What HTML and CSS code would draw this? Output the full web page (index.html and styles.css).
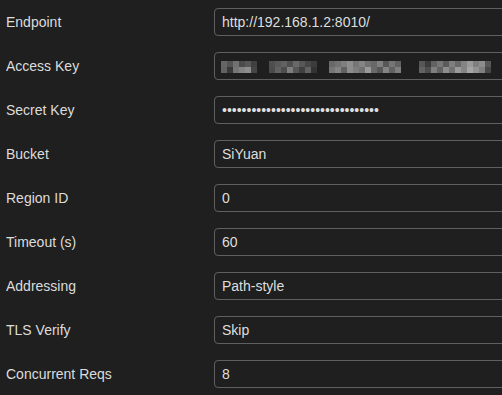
FILE: index.html
```html
<!DOCTYPE html>
<html lang="en">
<head>
<meta charset="utf-8">
<title>S3 Settings</title>
<link rel="stylesheet" href="styles.css">
</head>
<body>
<div class="form">
  <div class="row"><label class="label">Endpoint</label><div class="field">http://192.168.1.2:8010/</div></div>
  <div class="row"><label class="label">Access Key</label><div class="field"><div class="mosaic" aria-label="hidden access key"></div></div></div>
  <div class="row"><label class="label">Secret Key</label><div class="field secret">••••••••••••••••••••••••••••••••</div></div>
  <div class="row"><label class="label">Bucket</label><div class="field">SiYuan</div></div>
  <div class="row"><label class="label">Region ID</label><div class="field">0</div></div>
  <div class="row"><label class="label">Timeout (s)</label><div class="field">60</div></div>
  <div class="row"><label class="label">Addressing</label><div class="field">Path-style</div></div>
  <div class="row"><label class="label">TLS Verify</label><div class="field">Skip</div></div>
  <div class="row"><label class="label">Concurrent Reqs</label><div class="field">8</div></div>
</div>
</body>
</html>
```
FILE: styles.css
```css
html, body {
  margin: 0;
  padding: 0;
  background: #1f1f1f;
  overflow: hidden;
}
body {
  font-family: "Liberation Sans", Arial, sans-serif;
  font-size: 14px;
  color: #dcdcdc;
}
.form {
  display: flex;
  flex-direction: column;
  padding-left: 6px;
  width: 502px;
  box-sizing: border-box;
  overflow: hidden;
}
.row {
  display: flex;
  align-items: center;
  height: 44px;
  overflow: hidden;
}
.label {
  flex: 0 0 208px;
  color: #dcdcdc;
}
.field {
  flex: 0 0 320px;
  box-sizing: border-box;
  height: 28px;
  border: 1px solid #5f5f5f;
  border-radius: 4px;
  padding: 0 7px;
  display: flex;
  align-items: center;
  white-space: nowrap;
  color: #dedede;
  background: #1f1f1f;
}
.secret {
  font-size: 14px;
}
.mosaic {
  width: 270px;
  height: 12px;
  margin-left: -1px;
  margin-top: 1px;
  opacity: 0.9;
  background-repeat: no-repeat;
  background-size: 270px 6px, 270px 6px;
  background-position: 0 0, 0 6px;
  background-image:
    linear-gradient(to right, #6e6e6e 0 6px, #5a5a5a 6px 12px, #7a7a7a 12px 18px, #505050 18px 24px, #5e5e5e 24px 30px, #444 30px 36px, transparent 36px 48px, #555 48px 54px, #606060 54px 60px, #6a6a6a 60px 66px, #555 66px 72px, #727272 72px 78px, #5e5e5e 78px 84px, #4c4c4c 84px 90px, #404040 90px 96px, transparent 96px 108px, #727272 108px 114px, #7c7c7c 114px 120px, #8a8a8a 120px 126px, #9a9a9a 126px 132px, #808080 132px 138px, #909090 138px 144px, #7a7a7a 144px 150px, #727272 150px 156px, #8a8a8a 156px 162px, #5e5e5e 162px 168px, #808080 168px 174px, #6a6a6a 174px 180px, transparent 180px 198px, #5e5e5e 198px 204px, #404040 204px 210px, #6a6a6a 210px 216px, #808080 216px 222px, #626262 222px 228px, #8a8a8a 228px 234px, #727272 234px 240px, #909090 240px 246px, #a8a8a8 246px 252px, #8a8a8a 252px 258px, #9a9a9a 258px 264px, #5e5e5e 264px 270px),
    linear-gradient(to right, #6a6a6a 0 6px, #3c3c3c 6px 12px, #808080 12px 18px, #909090 18px 24px, #9a9a9a 24px 30px, #4a4a4a 30px 36px, transparent 36px 48px, #505050 48px 54px, #6a6a6a 54px 60px, #525252 60px 66px, #8a8a8a 66px 72px, #5e5e5e 72px 78px, #444 78px 84px, #6a6a6a 84px 90px, #363636 90px 96px, transparent 96px 108px, #808080 108px 114px, #909090 114px 120px, #6a6a6a 120px 126px, #9a9a9a 126px 132px, #8a8a8a 132px 138px, #7a7a7a 138px 144px, #a8a8a8 144px 150px, #727272 150px 156px, #5e5e5e 156px 162px, #909090 162px 168px, #6a6a6a 168px 174px, #8a8a8a 174px 180px, transparent 180px 198px, #6a6a6a 198px 204px, #525252 204px 210px, #8a8a8a 210px 216px, #6a6a6a 216px 222px, #9a9a9a 222px 228px, #7a7a7a 228px 234px, #a8a8a8 234px 240px, #909090 240px 246px, #b4b4b4 246px 252px, #a0a0a0 252px 258px, #8a8a8a 258px 264px, #4c4c4c 264px 270px);
}
```
